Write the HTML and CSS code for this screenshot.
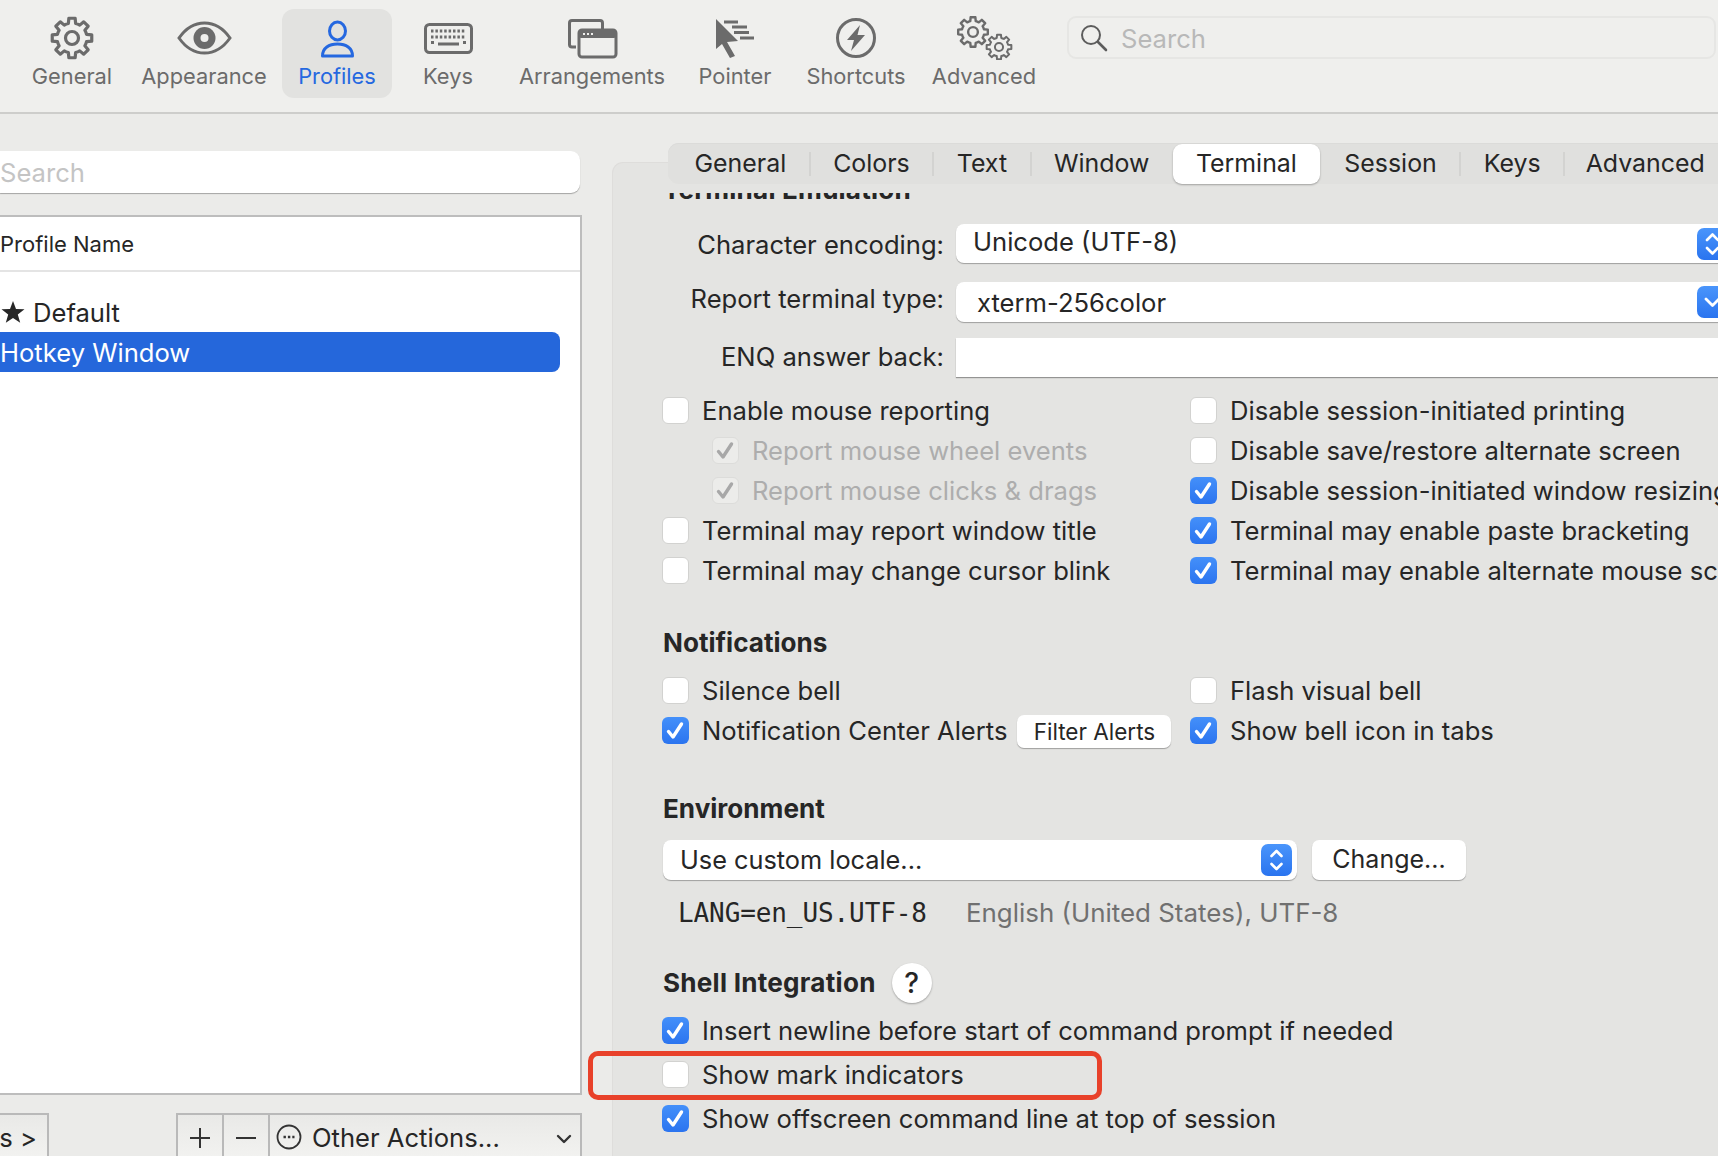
FILE: index.html
```html
<!DOCTYPE html>
<html>
<head>
    <title>Preferences</title>
    <link rel="stylesheet" href="styles.css">
</head>
<body>
    <svg class="defs" width="0" height="0">
        <symbol id="gear" viewBox="-24 -24 48 48" overflow="visible">
            <path d="M-3.63 -14.55L-3.13 -19.75L3.13 -19.75L3.63 -14.55A15 15 0 0 1 7.73 -12.86L11.76 -16.18L16.18 -11.76L12.86 -7.73A15 15 0 0 1 14.55 -3.63L19.75 -3.13L19.75 3.13L14.55 3.63A15 15 0 0 1 12.86 7.73L16.18 11.76L11.76 16.18L7.73 12.86A15 15 0 0 1 3.63 14.55L3.13 19.75L-3.13 19.75L-3.63 14.55A15 15 0 0 1 -7.73 12.86L-11.76 16.18L-16.18 11.76L-12.86 7.73A15 15 0 0 1 -14.55 3.63L-19.75 3.13L-19.75 -3.13L-14.55 -3.63A15 15 0 0 1 -12.86 -7.73L-16.18 -11.76L-11.76 -16.18L-7.73 -12.86A15 15 0 0 1 -3.63 -14.55Z" fill="none" stroke="#6b6b6b" stroke-width="3.2" stroke-linejoin="round"/>
            <circle r="6.5" fill="none" stroke="#6b6b6b" stroke-width="3.2"/>
        </symbol>
        <symbol id="tick" viewBox="0 0 26 27">
            <path d="M6.5 14.5L11 20L19.5 7" fill="none" stroke="currentColor" stroke-width="3.4" stroke-linecap="round" stroke-linejoin="round"/>
        </symbol>
    </svg>

    <header class="toolbar">
        <div class="tool tool-general">
            <svg class="tool-icon" width="48" height="44" viewBox="48 16 48 44"><use href="#gear" x="48" y="14" width="48" height="48"/></svg>
            <span>General</span>
        </div>
        <div class="tool tool-appearance">
            <svg class="tool-icon" width="60" height="44" viewBox="174 16 60 44">
                <path d="M179 38C186 28 195 23 204.5 23S223 28 230 38C223 48 214 53 204.5 53S186 48 179 38Z" fill="none" stroke="#6b6b6b" stroke-width="3"/>
                <circle cx="204.5" cy="38" r="11" fill="#6b6b6b"/>
                <circle cx="204.5" cy="38" r="4" fill="#efefed"/>
            </svg>
            <span>Appearance</span>
        </div>
        <div class="tool tool-profiles active">
            <svg class="tool-icon" width="44" height="44" viewBox="314 16 44 44">
                <ellipse cx="336.5" cy="31" rx="8" ry="9" fill="none" stroke="#2568e0" stroke-width="3"/>
                <path d="M321.5 56C321.5 48 328 44 336.5 44S351.5 48 351.5 56Z" fill="none" stroke="#2568e0" stroke-width="3" stroke-linejoin="round"/>
            </svg>
            <span>Profiles</span>
        </div>
        <div class="tool tool-keys">
            <svg class="tool-icon" width="56" height="44" viewBox="420 16 56 44">
                <rect x="425.5" y="24.5" width="46" height="28" rx="4" fill="none" stroke="#6b6b6b" stroke-width="3"/>
                <path d="M431 31H466M431 37H466" stroke="#6b6b6b" stroke-width="3" stroke-dasharray="2.5 1.9"/>
                <path d="M431 42.5H434M438 44H459M463 42.5H466" stroke="#6b6b6b" stroke-width="3"/>
            </svg>
            <span>Keys</span>
        </div>
        <div class="tool tool-arrangements">
            <svg class="tool-icon" width="56" height="44" viewBox="564 16 56 44">
                <path d="M576 47H572C570.5 47 569.5 46 569.5 44.5V23C569.5 21.5 570.5 20.5 572 20.5H600C601.5 20.5 602.5 21.5 602.5 23V29" fill="none" stroke="#6b6b6b" stroke-width="3"/>
                <rect x="579" y="30" width="37" height="27" rx="3" fill="none" stroke="#6b6b6b" stroke-width="3"/>
                <rect x="579" y="30" width="37" height="8" rx="2" fill="#6b6b6b"/>
                <path d="M583 34H594" stroke="#efefed" stroke-width="2" stroke-dasharray="2 2"/>
            </svg>
            <span>Arrangements</span>
        </div>
        <div class="tool tool-pointer">
            <svg class="tool-icon" width="46" height="44" viewBox="712 16 46 44">
                <path d="M716 19L738 41L727 42L735 56L730 58L722 44L716 49Z" fill="#6b6b6b"/>
                <path d="M724 22H738M732 27H747M734 32.5H749M740 38H754" stroke="#6b6b6b" stroke-width="3"/>
            </svg>
            <span>Pointer</span>
        </div>
        <div class="tool tool-shortcuts">
            <svg class="tool-icon" width="44" height="44" viewBox="834 16 44 44">
                <circle cx="856" cy="38" r="18.5" fill="none" stroke="#6b6b6b" stroke-width="3"/>
                <path d="M860 25L847 40H854L851 51L865 35H857.5Z" fill="#6b6b6b"/>
            </svg>
            <span>Shortcuts</span>
        </div>
        <div class="tool tool-advanced">
            <svg class="tool-icon" width="60" height="44" viewBox="954 16 60 44">
                <use href="#gear" x="955" y="14" width="36" height="36"/>
                <use href="#gear" x="984" y="32" width="30" height="30"/>
            </svg>
            <span>Advanced</span>
        </div>
        <div class="toolbar-search">
            <svg width="32" height="32" viewBox="0 0 32 32"><circle cx="14" cy="13" r="9" fill="none" stroke="#5c5c5c" stroke-width="2"/><path d="M21 20L29 28" stroke="#5c5c5c" stroke-width="2.6" stroke-linecap="round"/></svg>
            <span>Search</span>
        </div>
    </header>

    <main class="main">
        <section class="profiles">
            <div class="profile-search">Search</div>
            <div class="profile-table">
                <div class="table-head">Profile Name</div>
                <div class="table-row row-default">
                    <svg width="24" height="24" viewBox="0 0 24 24"><path d="M12 1L15 9L23.5 9.3L16.8 14.5L19.2 22.8L12 18L4.8 22.8L7.2 14.5L.5 9.3L9 9Z" fill="#262626"/></svg>
                    Default
                </div>
                <div class="table-row row-selected">Hotkey Window</div>
            </div>
            <div class="profile-actions">
                <div class="tags-btn"><span>Tags &gt;</span></div>
                <div class="action-group">
                    <div class="action action-small">
                        <svg width="22" height="22" viewBox="0 0 22 22"><path d="M11 1V21M1 11H21" stroke="#333" stroke-width="2"/></svg>
                    </div>
                    <div class="action action-small">
                        <svg width="22" height="22" viewBox="0 0 22 22"><path d="M1 11H21" stroke="#333" stroke-width="2"/></svg>
                    </div>
                    <div class="action action-menu">
                        <svg class="action-more" width="26" height="26" viewBox="0 0 26 26"><circle cx="13" cy="13" r="11.5" fill="none" stroke="#333" stroke-width="1.8"/><path d="M7.5 13H18.5" stroke="#333" stroke-width="2.4" stroke-dasharray="2.4 2" /></svg>
                        <span>Other Actions...</span>
                        <svg class="action-caret" width="16" height="10" viewBox="0 0 16 10"><path d="M2 2L8 8L14 2" fill="none" stroke="#333" stroke-width="2.4" stroke-linecap="round" stroke-linejoin="round"/></svg>
                    </div>
                </div>
            </div>
        </section>

        <section class="settings">
            <nav class="tabs">
                <span class="tab">General</span><i class="tab-sep"></i>
                <span class="tab">Colors</span><i class="tab-sep"></i>
                <span class="tab">Text</span><i class="tab-sep"></i>
                <span class="tab">Window</span>
                <span class="tab tab-active">Terminal</span>
                <span class="tab">Session</span><i class="tab-sep"></i>
                <span class="tab">Keys</span><i class="tab-sep tab-sep-last"></i>
                <span class="tab">Advanced</span>
            </nav>
            <div class="panel">
                <div class="panel-content">
                    <div class="heading-clip">
                        <h2 class="heading heading-clipped">Terminal Emulation</h2>
                    </div>

                    <div class="field field-encoding">
                        <label class="field-label">Character encoding:</label>
                        <div class="popup popup-wide">
                            <span class="popup-text popup-text-up">Unicode (UTF-8)</span>
                            <span class="stepper">
                                <svg width="31" height="32" viewBox="0 0 31 32"><path d="M10 12L15.5 6.5L21 12M10 20L15.5 25.5L21 20" fill="none" stroke="#fff" stroke-width="2.6" stroke-linecap="round" stroke-linejoin="round"/></svg>
                            </span>
                        </div>
                    </div>
                    <div class="field field-type">
                        <label class="field-label">Report terminal type:</label>
                        <div class="popup popup-wide">
                            <span class="popup-text popup-text-inset">xterm-256color</span>
                            <span class="stepper">
                                <svg width="31" height="32" viewBox="0 0 31 32"><path d="M9 13L15.5 19.5L22 13" fill="none" stroke="#fff" stroke-width="2.8" stroke-linecap="round" stroke-linejoin="round"/></svg>
                            </span>
                        </div>
                    </div>
                    <div class="field field-enq">
                        <label class="field-label">ENQ answer back:</label>
                        <div class="text-input"></div>
                    </div>

                    <div class="checks checks-terminal">
                        <div class="check"><span class="box"></span>Enable mouse reporting</div>
                        <div class="check"><span class="box"></span>Disable session-initiated printing</div>
                        <div class="check check-sub disabled"><span class="box"><svg width="26" height="27"><use href="#tick"/></svg></span>Report mouse wheel events</div>
                        <div class="check"><span class="box"></span>Disable save/restore alternate screen</div>
                        <div class="check check-sub disabled"><span class="box"><svg width="26" height="27"><use href="#tick"/></svg></span>Report mouse clicks &amp; drags</div>
                        <div class="check"><span class="box on"><svg width="26" height="27"><use href="#tick"/></svg></span>Disable session-initiated window resizing</div>
                        <div class="check"><span class="box"></span>Terminal may report window title</div>
                        <div class="check"><span class="box on"><svg width="26" height="27"><use href="#tick"/></svg></span>Terminal may enable paste bracketing</div>
                        <div class="check"><span class="box"></span>Terminal may change cursor blink</div>
                        <div class="check"><span class="box on"><svg width="26" height="27"><use href="#tick"/></svg></span>Terminal may enable alternate mouse scroll</div>
                    </div>

                    <h2 class="heading heading-notifications">Notifications</h2>
                    <div class="checks checks-notifications">
                        <div class="check"><span class="box"></span>Silence bell</div>
                        <div class="check"><span class="box"></span>Flash visual bell</div>
                        <div class="check"><span class="box on"><svg width="26" height="27"><use href="#tick"/></svg></span>Notification Center Alerts<button class="btn btn-filter">Filter Alerts</button></div>
                        <div class="check"><span class="box on"><svg width="26" height="27"><use href="#tick"/></svg></span>Show bell icon in tabs</div>
                    </div>

                    <h2 class="heading heading-environment">Environment</h2>
                    <div class="locale-row">
                        <div class="popup popup-locale">
                            <span class="popup-text">Use custom locale...</span>
                            <span class="stepper">
                                <svg width="31" height="32" viewBox="0 0 31 32"><path d="M10.5 12L15.5 7L20.5 12M10.5 20L15.5 25L20.5 20" fill="none" stroke="#fff" stroke-width="2.6" stroke-linecap="round" stroke-linejoin="round"/></svg>
                            </span>
                        </div>
                        <button class="btn btn-change">Change...</button>
                    </div>
                    <div class="locale-info">
                        <span class="locale-code">LANG=en_US.UTF-8</span>
                        <span class="locale-name">English (United States), UTF-8</span>
                    </div>

                    <div class="shell-head">
                        <h2 class="heading">Shell Integration</h2>
                        <span class="help">?</span>
                    </div>
                    <div class="shell-list">
                        <div class="check"><span class="box on"><svg width="26" height="27"><use href="#tick"/></svg></span>Insert newline before start of command prompt if needed</div>
                        <div class="check check-marked"><span class="box"></span>Show mark indicators<span class="callout"></span></div>
                        <div class="check"><span class="box on"><svg width="26" height="27"><use href="#tick"/></svg></span>Show offscreen command line at top of session</div>
                    </div>
                </div>
            </div>
        </section>
    </main>
</body>
</html>
```

FILE: styles.css
```css
html, body {
    height: 100%;
    overflow: hidden;
}
body {
    margin: 0;
    background-color: #ebebe9;
    color: #262626;
    font-family: Inter, "Noto Sans", sans-serif;
    font-size: 25.6px;
    display: flex;
    flex-direction: column;
}
.defs {
    position: absolute;
}

/* top toolbar */
.toolbar {
    flex: none;
    height: 103px;
    padding: 9px 2px 0 18px;
    display: grid;
    grid-template-columns: 108px 156px 110px 112px 176px 110px 132px 124px 1fr;
    align-items: start;
    background-color: #efefed;
    border-bottom: 2px solid #cdcdcb;
}
.tool {
    height: 89px;
    padding-top: 7px;
    box-sizing: border-box;
    display: flex;
    flex-direction: column;
    align-items: center;
    color: #6b6b6b;
    font-size: 21.8px;
    line-height: 24px;
    white-space: nowrap;
}
.tool-icon {
    display: block;
    margin-bottom: 4px;
}
.tool.active {
    background-color: #e2e2e0;
    border-radius: 12px;
    color: #2568e0;
}
.toolbar-search {
    margin: 7px 0 0 21px;
    height: 39px;
    padding-left: 8px;
    display: flex;
    align-items: center;
    gap: 12px;
    border: 2px solid #e6e6e4;
    border-radius: 9px;
    color: #b8b8b8;
}
.toolbar-search span {
    margin-top: 2px;
}

.main {
    flex: 1;
    min-height: 0;
    display: flex;
}

/* profile list on the left */
.profiles {
    flex: none;
    width: 582px;
    display: flex;
    flex-direction: column;
}
.profile-search {
    flex: none;
    width: 580px;
    height: 42px;
    margin-top: 37px;
    box-sizing: border-box;
    line-height: 44px;
    background-color: #fff;
    border-radius: 0 9px 9px 0;
    box-shadow: 0 1px 1px rgba(0, 0, 0, 0.3);
    color: #c4c4c4;
}
.profile-table {
    flex: none;
    height: 880px;
    margin-top: 22px;
    box-sizing: border-box;
    background-color: #fff;
    border: 2px solid #bdbdbd;
    border-left: 0;
}
.table-head {
    height: 55px;
    box-sizing: border-box;
    margin-bottom: 20px;
    line-height: 54px;
    font-size: 22px;
    border-bottom: 2px solid #e4e4e4;
}
.table-row {
    height: 40px;
    display: flex;
    align-items: center;
    gap: 8px;
    white-space: nowrap;
}
.row-default svg {
    margin-left: 1px;
}
.row-selected {
    width: 560px;
    background-color: #2567db;
    border-radius: 0 8px 8px 0;
    color: #fff;
}
.profile-actions {
    flex: none;
    height: 60px;
    margin-top: 18px;
    display: flex;
    justify-content: space-between;
}
.tags-btn {
    width: 49px;
    box-sizing: border-box;
    display: flex;
    justify-content: flex-end;
    padding: 7px 10px 0 0;
    overflow: hidden;
    white-space: nowrap;
    border: 2px solid #b9b9b9;
    border-left: 0;
    background: linear-gradient(#e9e9e7, #f5f5f3);
}
.action-group {
    width: 406px;
    display: flex;
    box-sizing: border-box;
    border: 2px solid #b9b9b9;
    background: linear-gradient(#e9e9e7, #f5f5f3);
}
.action {
    display: flex;
    align-items: flex-start;
    padding-top: 7px;
    box-sizing: border-box;
}
.action-small {
    width: 46px;
    padding-top: 12px;
    justify-content: center;
    border-right: 2px solid #b9b9b9;
}
.action-menu {
    flex: 1;
    padding-left: 6px;
    gap: 10px;
    white-space: nowrap;
}
.action-more {
    margin-top: 2px;
}
.action-caret {
    margin: 12px 8px 0 auto;
}

/* right hand settings panel */
.settings {
    position: relative;
    flex: 1;
    min-width: 0;
    margin-left: 30px;
    padding-top: 48px;
    display: flex;
}
.tabs {
    position: absolute;
    top: 29px;
    left: 56px;
    right: -30px;
    height: 41px;
    padding-left: 3px;
    display: flex;
    align-items: center;
    font-size: 24.9px;
    background-color: #e0e0de;
    border-radius: 11px;
    box-shadow: inset 0 1px 0 #dbdbd9;
    z-index: 1;
    white-space: nowrap;
}
.tab {
    padding: 0 23.5px 2px;
    line-height: 38px;
}
.tab-sep {
    width: 2px;
    height: 24px;
    margin-left: -1px;
    margin-right: -1px;
    background-color: #d3d3d1;
}
.tab-sep-last {
    margin-right: -3px;
}
.tab-active {
    margin-right: 1px;
    padding: 0 23px 2px;
    background-color: #fff;
    border-radius: 9px;
    box-shadow: 0 1px 2px rgba(0, 0, 0, 0.3);
}
.panel {
    flex: 1;
    min-width: 0;
    padding-top: 30px;
    background-color: #e4e4e2;
    border-top: 1px solid #dedddb;
    border-left: 1px solid #dedddb;
    border-top-left-radius: 11px;
    box-sizing: border-box;
}
.panel-content {
    padding-left: 50px;
}
.heading {
    margin: 0;
    font-size: 26.1px;
    font-weight: 700;
    line-height: 30px;
    white-space: nowrap;
}
.heading-clip {
    height: 12px;
    overflow: hidden;
}
.heading-clipped {
    margin-top: -18px;
    letter-spacing: 0.2px;
}
.heading-notifications {
    margin-top: 38px;
}
.heading-environment {
    margin-top: 44px;
}

.field {
    display: flex;
    align-items: center;
    margin-left: -50px;
    white-space: nowrap;
}
.field-encoding {
    margin-top: 19px;
    height: 39px;
}
.field-type {
    margin-top: 19px;
    height: 40px;
}
.field-enq {
    margin-top: 16px;
    height: 39px;
}
.field-label {
    flex: none;
    width: 331px;
    text-align: right;
    margin-right: 12px;
}
.field-encoding .field-label {
    margin-top: 2px;
}
.field-type .field-label {
    margin-top: -8px;
}
.field-enq .field-label {
    margin-top: -2px;
}
.popup {
    height: 100%;
    box-sizing: border-box;
    display: flex;
    align-items: center;
    justify-content: space-between;
    background-color: #fff;
    border-radius: 8px;
    box-shadow: 0 1px 1px rgba(0, 0, 0, 0.3);
}
.popup-wide {
    flex: none;
    width: 777px;
}
.popup-text {
    padding-left: 17px;
}
.popup-text-up {
    margin-top: -4px;
}
.popup-text-inset {
    padding-left: 21px;
}
.stepper {
    flex: none;
    width: 31px;
    height: 32px;
    margin-right: 5px;
    background: linear-gradient(#4a95fb, #2a74ef);
    border-radius: 7px;
}
.stepper svg {
    display: block;
}
.text-input {
    flex: none;
    width: 777px;
    height: 100%;
    background-color: #fff;
    box-shadow: 0 1px 1px rgba(0, 0, 0, 0.35);
}

.checks {
    display: grid;
    grid-template-columns: 528px 1fr;
    grid-auto-rows: 40px;
}
.checks-terminal {
    margin-top: 13px;
}
.checks-notifications {
    margin-top: 12px;
}
.check {
    position: relative;
    display: flex;
    align-items: center;
    white-space: nowrap;
}
.box {
    flex: none;
    width: 27px;
    height: 27px;
    margin: 0 13px 0 -1px;
    box-sizing: border-box;
    background-color: #fff;
    border: 1px solid #d2d2d0;
    border-radius: 6px;
}
.box svg {
    display: block;
    margin: -1px;
}
.box.on {
    background: linear-gradient(#4490fa, #2b74ef);
    border: 0;
    color: #fff;
}
.box.on svg {
    margin: 0;
}
.check-sub {
    padding-left: 50px;
}
.disabled {
    color: #adadad;
}
.disabled .box {
    background-color: #ececea;
    border-color: #dcdcda;
    color: #a8a8a8;
}

.btn {
    font: inherit;
    color: inherit;
    background-color: #fff;
    border: 0;
    border-radius: 7px;
    box-shadow: 0 1px 1px rgba(0, 0, 0, 0.3);
    padding: 0;
}
.btn-filter {
    width: 154px;
    height: 33px;
    margin: 2px 0 0 10px;
    font-size: 22.5px;
}
.locale-row {
    margin-top: 16px;
    height: 40px;
    display: flex;
    gap: 15px;
    font-size: 25.3px;
}
.popup-locale {
    width: 634px;
}
.popup-locale .popup-text {
    margin-top: -2px;
}
.btn-change {
    width: 154px;
    height: 40px;
    padding-bottom: 2px;
    font-size: 25px;
}
.locale-info {
    margin-top: 18px;
    height: 30px;
    padding-left: 15px;
    display: flex;
    align-items: center;
    white-space: nowrap;
}
.locale-code {
    width: 288px;
    font-family: "DejaVu Sans Mono", monospace;
    font-size: 26px;
    letter-spacing: -0.1px;
}
.locale-name {
    color: #707070;
    font-size: 25.9px;
    margin-top: -2px;
}
.shell-head {
    margin-top: 35px;
    height: 40px;
    display: flex;
    align-items: center;
    gap: 16px;
}
.shell-head .heading {
    letter-spacing: 0.25px;
}
.help {
    width: 40px;
    height: 40px;
    text-align: center;
    line-height: 40px;
    font-size: 28px;
    font-weight: 500;
    background-color: #fff;
    border-radius: 50%;
    box-shadow: 0 1px 2px rgba(0, 0, 0, 0.3);
}
.shell-list {
    margin-top: 7px;
    display: flex;
    flex-direction: column;
    gap: 4px;
}
.shell-list .check {
    height: 40px;
}
.callout {
    position: absolute;
    left: -75px;
    top: -3px;
    width: 514px;
    height: 49px;
    box-sizing: border-box;
    border: 5px solid #e8412a;
    border-radius: 10px;
}
```
